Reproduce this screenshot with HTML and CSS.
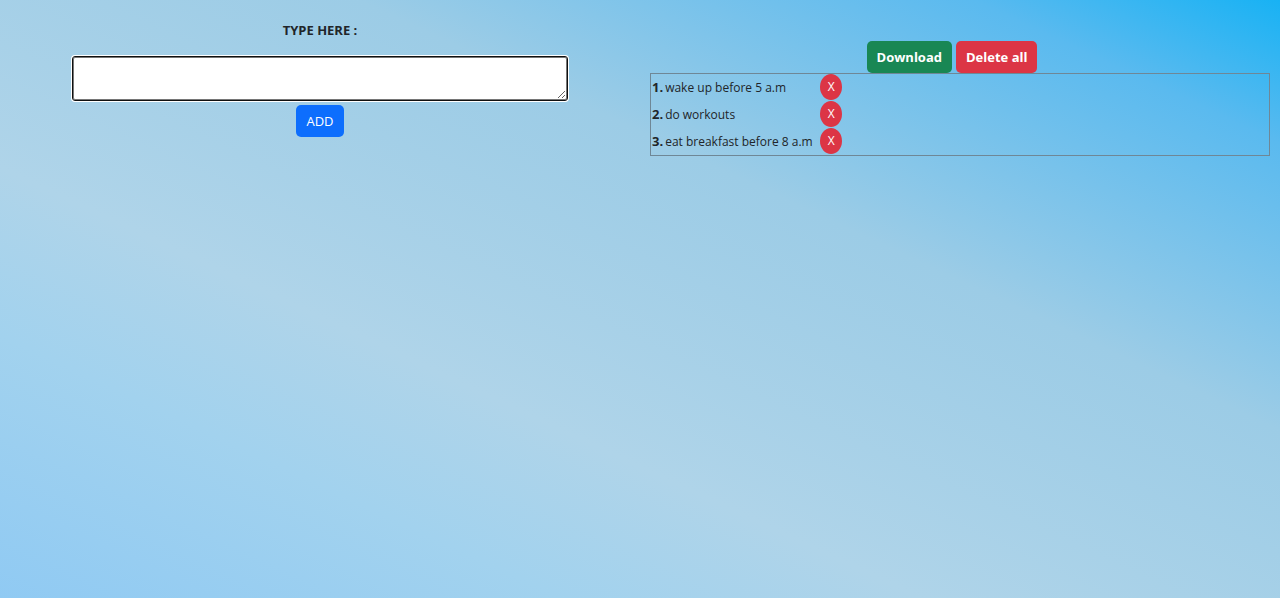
FILE: index.html
```html
<!DOCTYPE html>
<html lang="en">
<head>
<meta charset="utf-8">
<meta name="viewport" content="width=device-width, initial-scale=1">
<title>To-do list</title>
<link rel="stylesheet" href="styles.css">
</head>
<body>
<main class="page">
  <section class="entry">
    <label class="entry-label" for="task">TYPE HERE :</label>
    <textarea class="entry-box" id="task"></textarea>
    <button class="btn btn-add" type="button">ADD</button>
  </section>
  <section class="tasks">
    <div class="actions">
      <button class="btn btn-download" type="button">Download</button>
      <button class="btn btn-clear" type="button">Delete all</button>
    </div>
    <div class="task-frame">
      <table class="task-table">
        <tbody>
          <tr><th scope="row">1.</th><td class="task-name">wake up before 5 a.m</td><td><button class="remove" type="button">X</button></td></tr>
          <tr><th scope="row">2.</th><td class="task-name">do workouts</td><td><button class="remove" type="button">X</button></td></tr>
          <tr><th scope="row">3.</th><td class="task-name">eat breakfast before 8 a.m</td><td><button class="remove" type="button">X</button></td></tr>
        </tbody>
      </table>
    </div>
  </section>
</main>
</body>
</html>
```
FILE: styles.css
```css
* {
  box-sizing: border-box;
}

body {
  margin: 0;
  min-height: 100vh;
  background: linear-gradient(to bottom left, #18b2f4 0%, #5abaef 12%, #9ccce6 36%, #afd4e9 64%, #a2d2ee 78%, #90caf3 100%);
  color: #212529;
  font-family: "Open Sans", "Noto Sans", sans-serif;
  font-size: 13px;
  line-height: 20px;
}

.page {
  display: grid;
  grid-template-columns: 1fr 1fr;
  align-items: start;
}

.entry {
  display: flex;
  flex-direction: column;
  align-items: center;
  padding: 20px 0;
}

.entry-label {
  margin-bottom: 17px;
  font-weight: 700;
}

.entry-box {
  width: calc(80% - 18px);
  height: 43px;
  margin-bottom: 5px;
  border: 1px solid #767676;
  border-radius: 2px;
  outline: 1px solid #101010;
  box-shadow: 0 0 0 2px #fff;
  background: #fff;
  resize: both;
}

.btn {
  height: 32px;
  padding: 0 10px;
  border: 0;
  border-radius: 5px;
  color: #fff;
  font: inherit;
}

.btn-add {
  background: #0d6efd;
}

.btn-download,
.btn-clear {
  font-weight: 700;
}

.btn-download {
  background: #198754;
}

.btn-clear {
  background: #dc3545;
}

.tasks {
  padding: 41px 10px 0;
}

.actions {
  display: flex;
  justify-content: center;
  gap: 4px;
  padding-right: 16px;
}

.task-frame {
  border: 1px solid #6f8796;
}

.task-table {
  border-spacing: 1px 0;
}

.task-table th,
.task-table td {
  height: 27px;
  padding: 0 0 1px;
  text-align: left;
  vertical-align: middle;
}

.task-table .task-name {
  min-width: 155px;
  padding: 1px 0 0 1px;
  font-size: 12px;
}

.remove {
  display: block;
  width: 22px;
  height: 26px;
  padding: 0;
  border: 0;
  border-radius: 50%;
  background: #dc3545;
  color: #fff;
  font: inherit;
  font-size: 12px;
}
```
